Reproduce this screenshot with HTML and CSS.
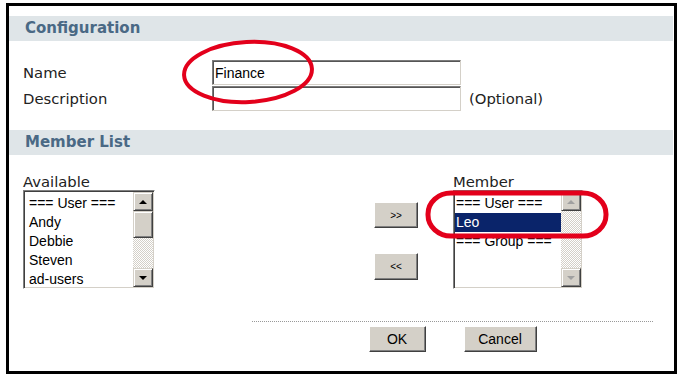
FILE: index.html
```
<!DOCTYPE html>
<html lang="en">
<head>
    <meta charset="UTF-8">
    <title>Group - Edit</title>
    <link rel="stylesheet" href="styles.css">
</head>
<body>
    <div class="frame">
        <div class="band">Configuration</div>

        <div class="fields">
            <div class="row">
                <label class="label">Name</label>
                <input class="text" type="text" value="Finance">
            </div>
            <div class="row">
                <label class="label">Description</label>
                <input class="text" type="text" value="">
                <span class="hint">(Optional)</span>
            </div>
        </div>

        <div class="band">Member List</div>

        <div class="members">
            <div class="col">
                <div class="cap">Available</div>
                <div class="listbox wide">
                    <div class="items">
                        <div>=== User ===</div>
                        <div>Andy</div>
                        <div>Debbie</div>
                        <div>Steven</div>
                        <div>ad-users</div>
                    </div>
                    <div class="scroll">
                        <div class="arrow"><span class="tri up"></span></div>
                        <div class="thumb"></div>
                        <div class="track"></div>
                        <div class="arrow"><span class="tri down"></span></div>
                    </div>
                </div>
            </div>

            <div class="movers">
                <button class="button small">&gt;&gt;</button>
                <button class="button small">&lt;&lt;</button>
            </div>

            <div class="col">
                <div class="cap">Member</div>
                <div class="listbox narrow">
                    <div class="items tight">
                        <div>=== User ===</div>
                        <div class="selected">Leo</div>
                        <div>=== Group ===</div>
                    </div>
                    <div class="scroll">
                        <div class="arrow off"><span class="tri up"></span></div>
                        <div class="track"></div>
                        <div class="arrow off"><span class="tri down"></span></div>
                    </div>
                </div>
            </div>
        </div>

        <div class="actions">
            <div class="rule"></div>
            <div class="btns">
                <button class="button ok">OK</button>
                <button class="button cancel">Cancel</button>
            </div>
        </div>
    </div>

    <!-- hand-drawn annotation marks over the form -->
    <svg class="marks" width="681" height="379" viewBox="0 0 681 379">
        <ellipse cx="248" cy="72" rx="64" ry="30" transform="rotate(-3 248 72)" fill="none" stroke="#e3001b" stroke-width="4"/>
        <rect x="428" y="193" width="178" height="43" rx="23" ry="21" fill="none" stroke="#e3001b" stroke-width="5"/>
    </svg>
</body>
</html>
```

FILE: styles.css
```
body {
    margin: 0;
    background: #fff;
    position: relative;
    font-family: "DejaVu Sans", Verdana, sans-serif;
    color: #222;
}
.frame {
    margin: 3px 0 0 6px;
    width: 665px;
    height: 365px;
    border: 3px solid #000;
}
.band {
    margin: 10px 1px 0 0;
    height: 25px;
    line-height: 25px;
    padding-left: 16px;
    background: #dfe5e8;
    color: #4a6985;
    font-weight: bold;
    font-size: 15px;
}
.fields {
    margin: 19px 0 19px 14px;
    display: flex;
    flex-direction: column;
    gap: 1px;
}
.row {
    display: flex;
    align-items: center;
    height: 25px;
}
.label {
    width: 189px;
    font-size: 14.8px;
}
.text {
    box-sizing: border-box;
    width: 249px;
    height: 25px;
    margin: 0;
    padding: 0 2px;
    border: 1px solid;
    border-color: #7b7b7b #d4d0c8 #d4d0c8 #7b7b7b;
    box-shadow: inset 1px 1px 0 #555;
    font-family: "Liberation Sans", Arial, sans-serif;
    font-size: 14px;
    color: #000;
    outline: none;
}
.hint {
    margin-left: 8px;
    font-size: 14.8px;
}
.members {
    display: grid;
    grid-template-columns: 132px 219px 44px 35px 130px;
    margin: 19px 0 0 14px;
}
.col {
    grid-column: 1;
}
.col + .movers {
    grid-column: 3;
}
.movers + .col {
    grid-column: 5;
}
.cap {
    height: 16px;
    line-height: 16px;
    font-size: 14.8px;
}
.listbox {
    box-sizing: border-box;
    display: flex;
    height: 99px;
    background: #fff;
    border: 1px solid;
    border-color: #808080 #fff #fff #808080;
    box-shadow: inset 1px 1px 0 #404040, inset -1px -1px 0 #d4d0c8;
    padding: 1px;
}
.listbox.wide {
    width: 132px;
}
.listbox.narrow {
    width: 130px;
}
.items {
    flex: 1;
    padding-top: 2px;
    overflow: hidden;
    font-family: "Liberation Sans", Arial, sans-serif;
    font-size: 14px;
    line-height: 19px;
    color: #000;
    white-space: nowrap;
}
.items div {
    padding-left: 4px;
}
.items.tight div {
    padding-left: 1px;
}
.items .selected {
    background: #0a246a;
    color: #fff;
}
.scroll {
    width: 20px;
    display: flex;
    flex-direction: column;
}
.arrow,
.thumb {
    box-sizing: border-box;
    height: 19px;
    background: #d4d0c8;
    border: 1px solid;
    border-color: #d4d0c8 #404040 #404040 #d4d0c8;
    box-shadow: inset 1px 1px 0 #fff, inset -1px -1px 0 #808080;
    display: flex;
    align-items: center;
    justify-content: center;
}
.thumb {
    height: 27px;
}
.track {
    flex: 1;
    background: repeating-conic-gradient(#d4d0c8 0 25%, #fff 0 50%) 0 0 / 2px 2px;
}
.tri {
    width: 0;
    height: 0;
    border-left: 4px solid transparent;
    border-right: 4px solid transparent;
}
.tri.up {
    border-bottom: 4px solid #000;
}
.tri.down {
    border-top: 4px solid #000;
}
.arrow.off .tri.up {
    border-bottom-color: #a0a0a0;
}
.arrow.off .tri.down {
    border-top-color: #a0a0a0;
}
.movers {
    display: flex;
    flex-direction: column;
    gap: 25px;
    padding-top: 28px;
}
.button {
    box-sizing: border-box;
    height: 26px;
    margin: 0;
    padding: 0;
    background: #d4d0c8;
    border: 1px solid;
    border-color: #fff #404040 #404040 #fff;
    box-shadow: inset -1px -1px 0 #808080;
    font-family: "Liberation Sans", Arial, sans-serif;
    font-size: 14px;
    color: #000;
}
.button.small {
    width: 44px;
    font-size: 10px;
}
.button.small + .button.small {
    height: 27px;
}
.actions {
    margin: 32px 0 0 243px;
    width: 401px;
}
.rule {
    border-top: 1px dotted #999;
}
.btns {
    display: flex;
    justify-content: center;
    gap: 38px;
    margin-top: 4px;
}
.ok {
    width: 57px;
}
.cancel {
    width: 73px;
}
.marks {
    position: absolute;
    left: 0;
    top: 0;
    pointer-events: none;
}
```
